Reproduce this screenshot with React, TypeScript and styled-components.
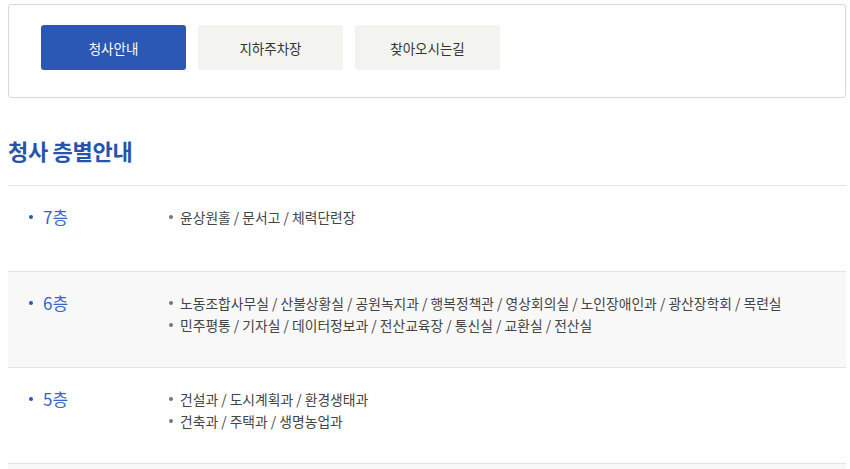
import React from "react";
import styled, { createGlobalStyle } from "styled-components";

const Global = createGlobalStyle`
  html, body { margin: 0; padding: 0; background: #fff; overflow: hidden; }
  body {
    font-family: "Noto Sans CJK KR", "Noto Sans", sans-serif;
    color: #444;
  }
`;

const Page = styled.div`
  width: 838px;
  padding: 4px 0 0 8px;
`;

const TabBox = styled.nav`
  box-sizing: border-box;
  height: 94px;
  border: 1px solid #d5d9dd;
  border-radius: 3px;
  padding: 20px 32px 0;
  display: flex;
  gap: 12px;
  align-items: flex-start;
`;

const TabButton = styled.button<{ $active?: boolean }>`
  width: 145px;
  height: 45px;
  border: 0;
  border-radius: 3px;
  background: ${(p) => (p.$active ? "#2a58b4" : "#f3f3ef")};
  color: ${(p) => (p.$active ? "#fff" : "#333")};
  font-family: inherit;
  font-size: 13.5px;
  padding: 0;
  cursor: pointer;
`;

const Title = styled.h2`
  margin: 38px 0 21px;
  font-size: 22px;
  line-height: 28px;
  font-weight: 700;
  color: #2553ad;
  letter-spacing: -0.3px;
`;

const FloorList = styled.div`
  border-bottom: 1px solid #e3e3e3;
`;

const Row = styled.div<{ $shade?: boolean }>`
  box-sizing: border-box;
  display: grid;
  grid-template-columns: 161px 1fr;
  min-height: 86px;
  padding: 20px 0 31px;
  border-top: 1px solid #e3e3e3;
  background: ${(p) => (p.$shade ? "#f8f8f8" : "#fff")};
`;

const Floor = styled.div`
  position: relative;
  padding-left: 35px;
  font-size: 17px;
  line-height: 22px;
  color: #3a62cc;
  &::before {
    content: "";
    position: absolute;
    left: 21px;
    top: 9px;
    width: 4px;
    height: 4px;
    border-radius: 50%;
    background: #2a58b4;
  }
`;

const Items = styled.ul`
  list-style: none;
  margin: 0;
  padding: 0;
`;

const Item = styled.li`
  position: relative;
  padding-left: 11px;
  font-size: 13.8px;
  line-height: 22px;
  color: #444;
  &::before {
    content: "";
    position: absolute;
    left: 0;
    top: 9px;
    width: 4px;
    height: 4px;
    border-radius: 50%;
    background: #777;
  }
`;

const floors = [
  { name: "7층", items: ["윤상원홀 / 문서고 / 체력단련장"] },
  {
    name: "6층",
    items: [
      "노동조합사무실 / 산불상황실 / 공원녹지과 / 행복정책관 / 영상회의실 / 노인장애인과 / 광산장학회 / 목련실",
      "민주평통 / 기자실 / 데이터정보과 / 전산교육장 / 통신실 / 교환실 / 전산실",
    ],
  },
  {
    name: "5층",
    items: ["건설과 / 도시계획과 / 환경생태과", "건축과 / 주택과 / 생명농업과"],
  },
];

export default function App() {
  return (
    <>
      <Global />
      <Page>
        <TabBox>
          <TabButton $active>청사안내</TabButton>
          <TabButton>지하주차장</TabButton>
          <TabButton>찾아오시는길</TabButton>
        </TabBox>
        <Title>청사 층별안내</Title>
        <FloorList>
          {floors.map((f, i) => (
            <Row key={f.name} $shade={i % 2 === 1}>
              <Floor>{f.name}</Floor>
              <Items>
                {f.items.map((t) => (
                  <Item key={t}>{t}</Item>
                ))}
              </Items>
            </Row>
          ))}
          <Row $shade aria-hidden="true" />
        </FloorList>
      </Page>
    </>
  );
}
